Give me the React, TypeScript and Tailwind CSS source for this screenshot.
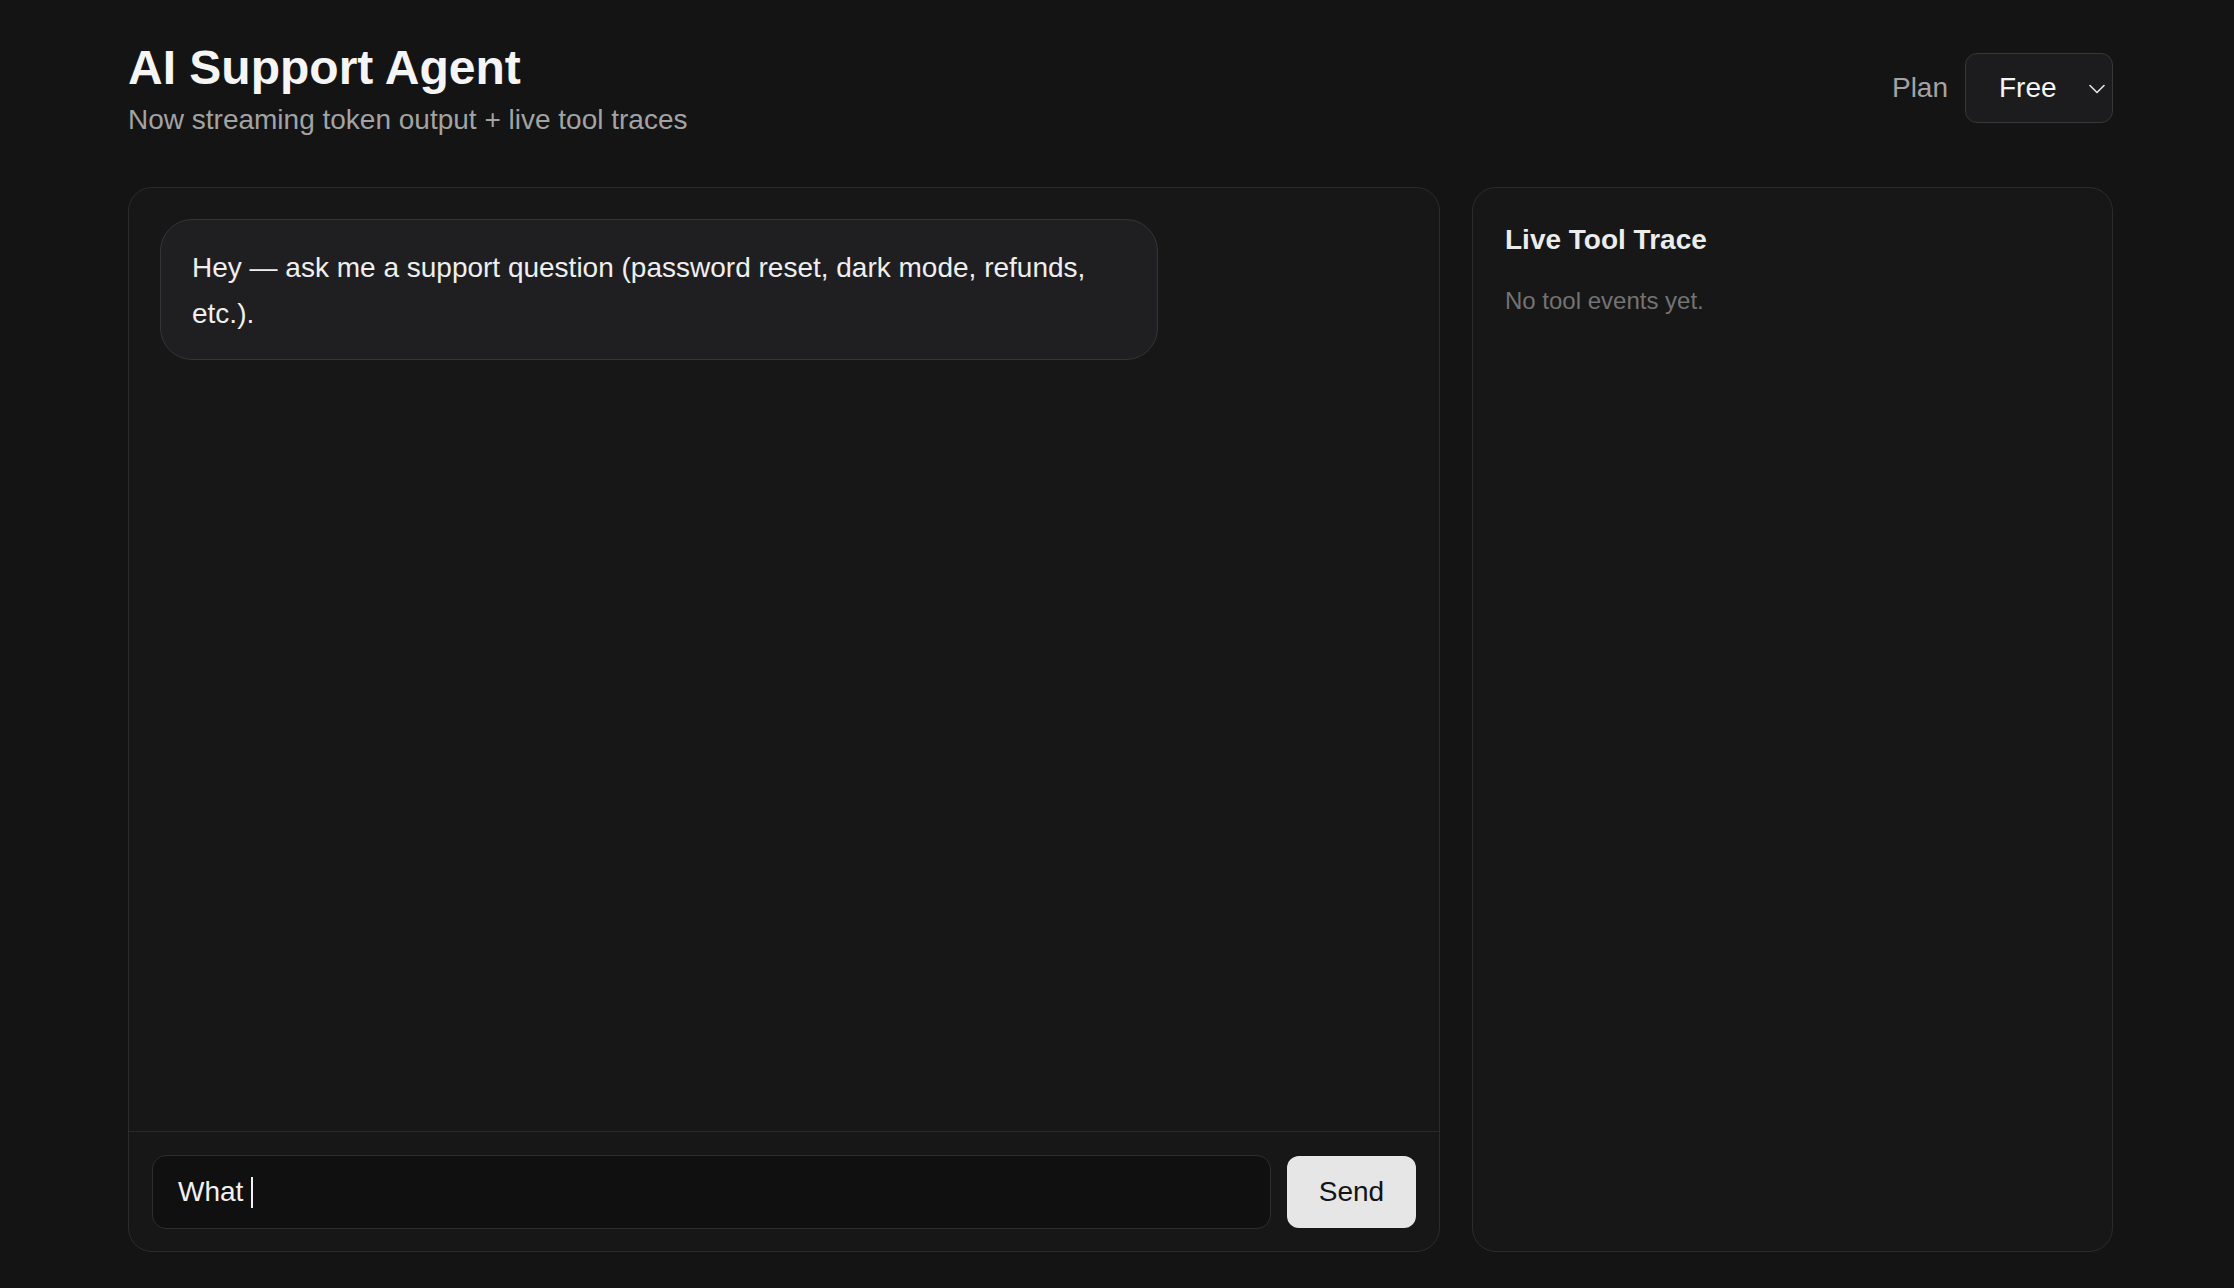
import React from "react";

export default function App() {
  return (
    <div className="min-h-screen bg-[#141414] text-white font-['Liberation_Sans',Arial,sans-serif]">
      <div className="pl-[128px] pr-[121px] pt-[36px] pb-[36px]">
        <header className="flex items-center justify-between">
          <div>
            <h1 className="text-[48px] leading-[64px] font-bold text-[#f5f5f5]">AI Support Agent</h1>
            <p className="text-[28px] leading-[40px] text-[#a3a3a3]">Now streaming token output + live tool traces</p>
          </div>
          <div className="flex items-center gap-[17px]">
            <span className="text-[28px] leading-[40px] text-[#a3a3a3]">Plan</span>
            <div className="flex h-[70px] w-[148px] items-center justify-between rounded-[12px] border border-[#38383a] bg-[#1c1c1e] pl-[33px] pr-[7px]">
              <span className="text-[28px] leading-[40px] text-[#f5f5f5]">Free</span>
              <svg width="16" height="10" viewBox="0 0 16 10" fill="none" className="mt-[1px]">
                <polyline points="1,1.5 8,8.5 15,1.5" stroke="#e5e5e5" strokeWidth="1.6" strokeLinecap="round" strokeLinejoin="round" />
              </svg>
            </div>
          </div>
        </header>

        <main className="mt-[47px] grid h-[1065px] grid-cols-[1fr_641px] gap-[32px]">
          <section className="flex min-h-0 flex-col rounded-[24px] border border-[#2c2c2c] bg-[#171717]">
            <div className="flex-1 px-[31px] pt-[31px]">
              <div className="w-fit max-w-[80%] rounded-[32px] border border-[#353538] bg-[#1f1f22] px-[31px] pt-[25px] pb-[23px] text-[28px] leading-[45.5px] text-[#efefef]">
                Hey — ask me a support question (password reset, dark mode, refunds, etc.).
              </div>
            </div>
            <div className="flex items-center gap-[16px] border-t border-[#2a2a2a] px-[23px] pt-[23px] pb-[22px]">
              <div className="flex h-[74px] flex-1 items-center rounded-[14px] border border-[#2e2e2e] bg-[#101010] px-[25px]">
                <span className="whitespace-pre text-[28px] leading-[40px] text-[#f2f2f2]">What </span>
                <span className="h-[31px] w-[2px] bg-[#f2f2f2]" />
              </div>
              <button className="h-[72px] w-[129px] rounded-[12px] bg-[#e6e6e6] text-[28px] leading-[40px] text-[#141414]">
                Send
              </button>
            </div>
          </section>

          <aside className="rounded-[24px] border border-[#2c2c2c] bg-[#171717] p-[32px]">
            <h2 className="text-[28px] leading-[40px] font-bold text-[#ececec]">Live Tool Trace</h2>
            <p className="mt-[25px] text-[24px] leading-[32px] text-[#737373]">No tool events yet.</p>
          </aside>
        </main>
      </div>
    </div>
  );
}
